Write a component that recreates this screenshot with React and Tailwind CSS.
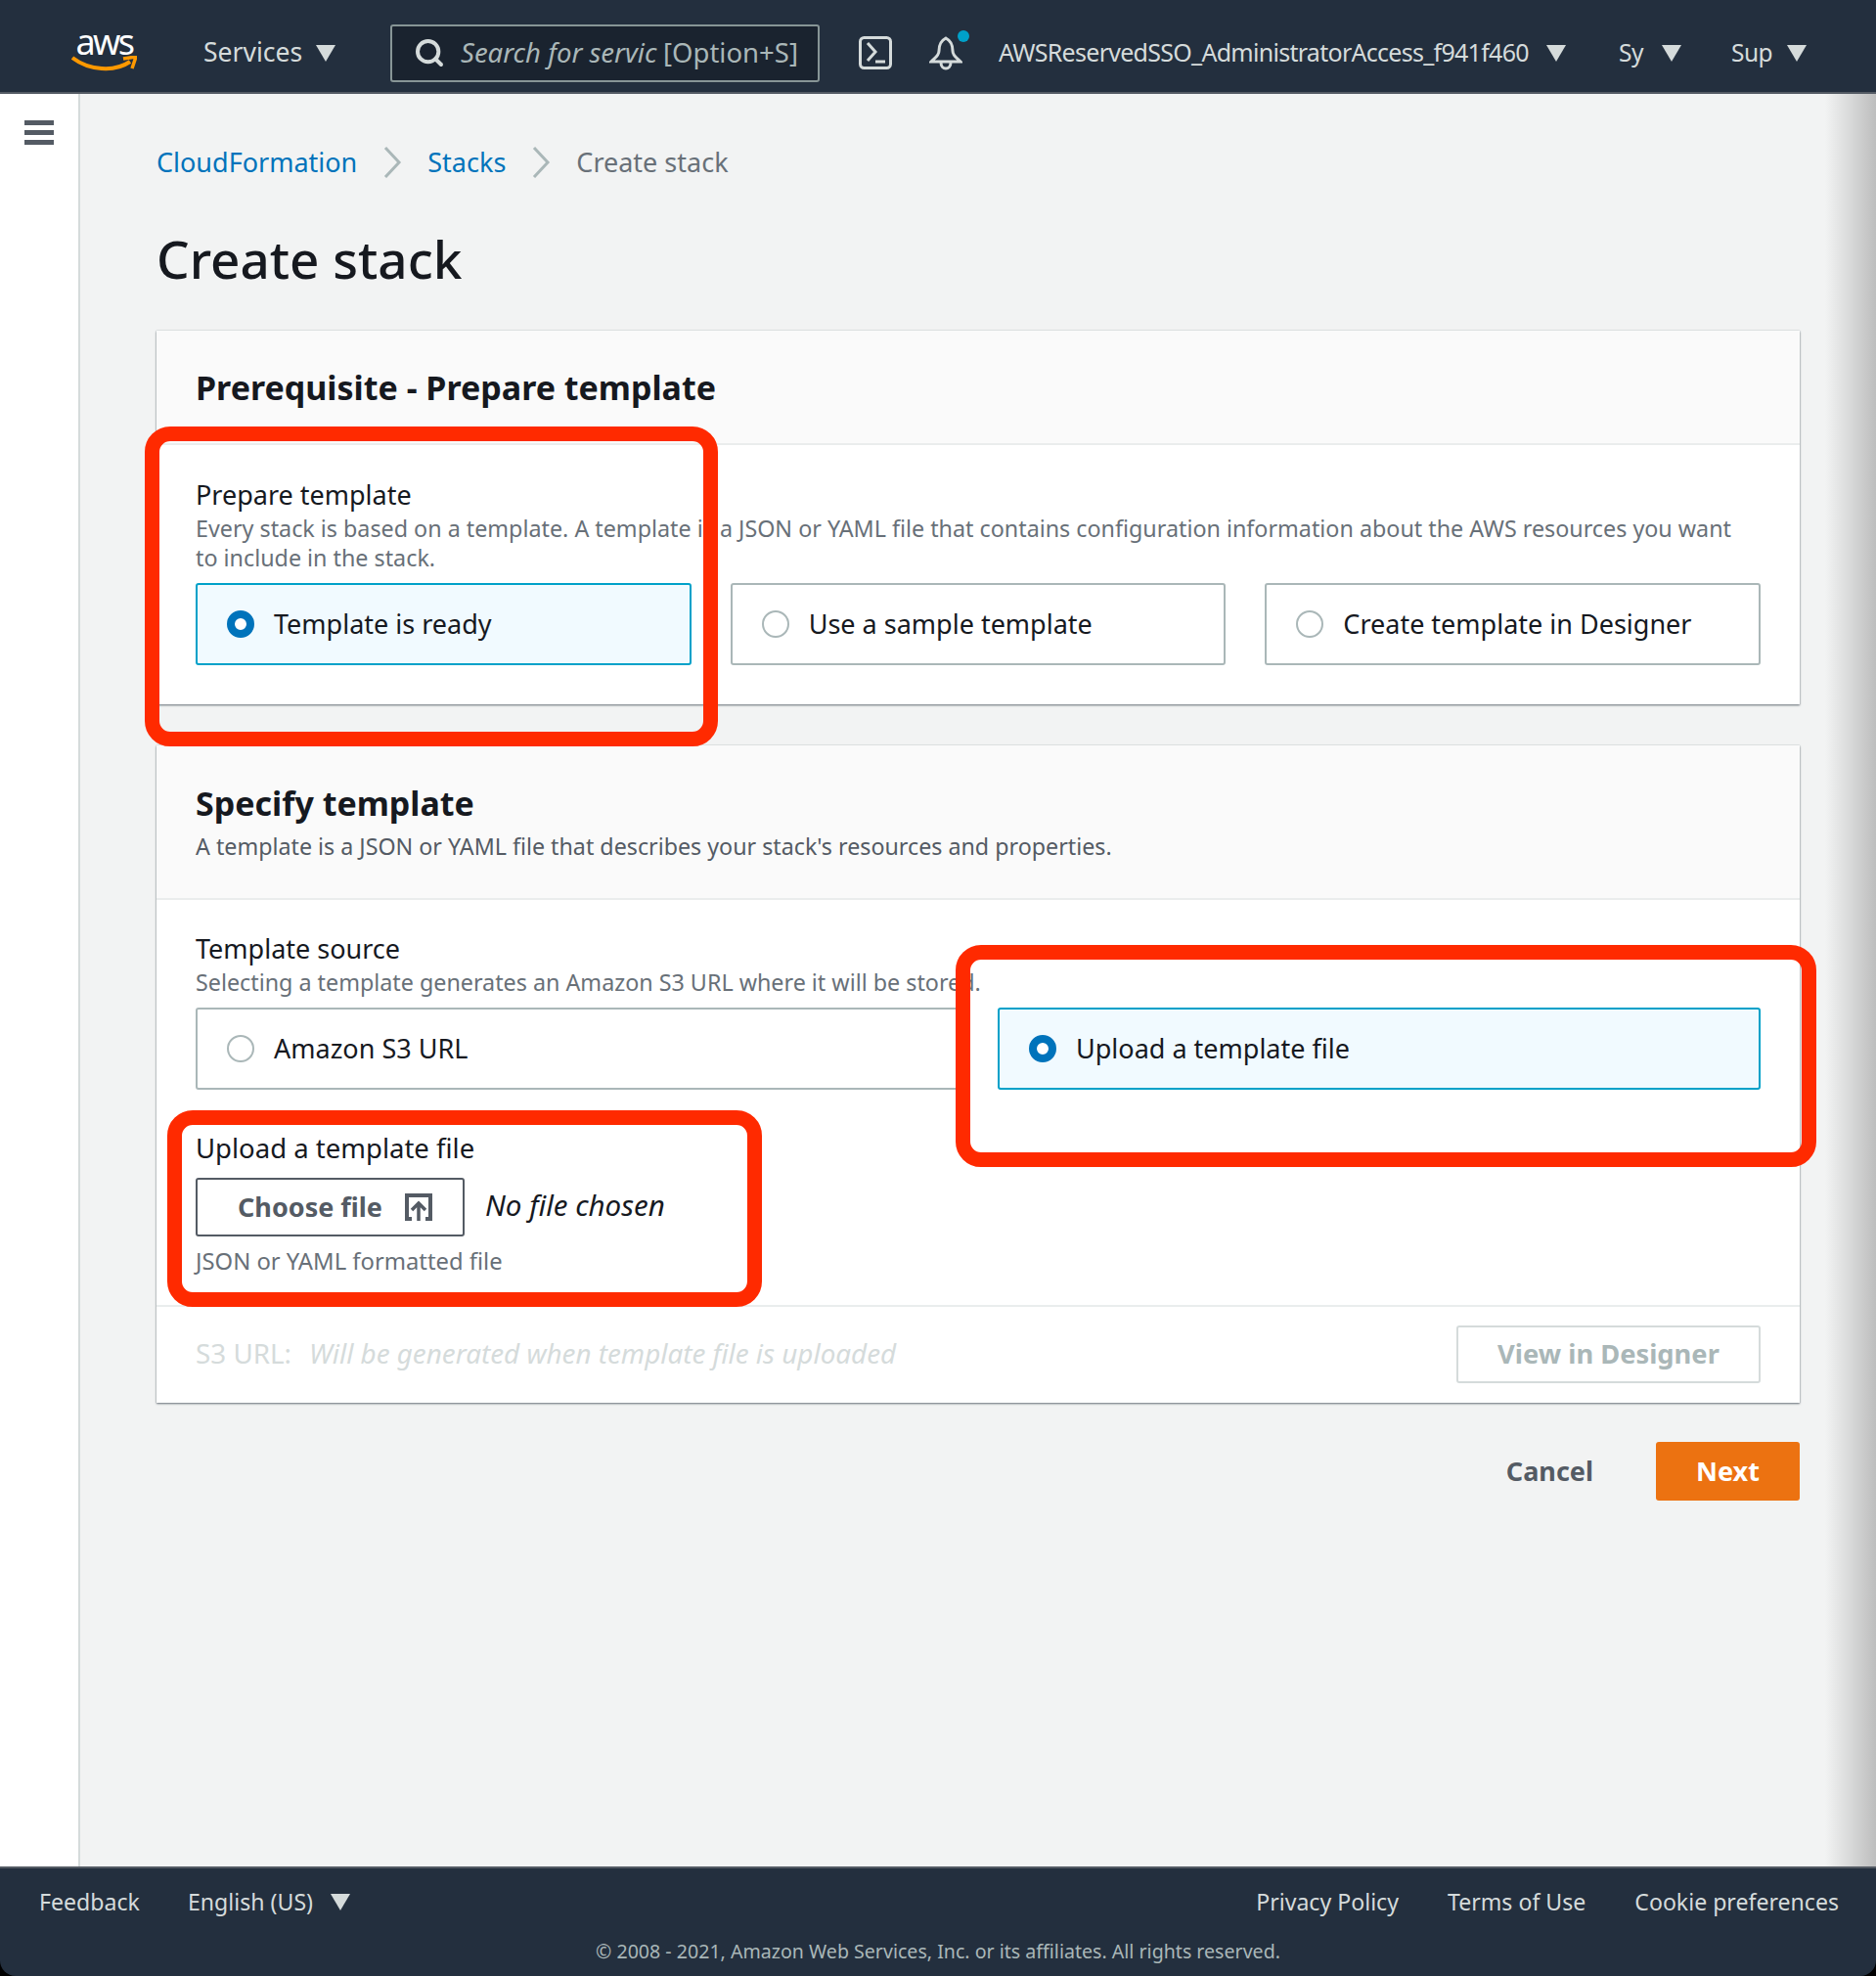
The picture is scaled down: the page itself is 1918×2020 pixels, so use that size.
import { Search } from "lucide-react";

function Caret({ className = "" }) {
    return (
        <svg width="20" height="17" viewBox="0 0 20 17" className={"shrink-0 " + className}>
            <path d="M0 0 H20 L10 17 Z" fill="#d5dbdb" />
        </svg>
    );
}

function Radio({ checked }) {
    if (checked) {
        return <span className="w-[28px] h-[28px] shrink-0 rounded-full border-[8px] border-[#0073bb] bg-white" />;
    }
    return <span className="w-[28px] h-[28px] shrink-0 rounded-full border-2 border-[#aab7b8] bg-white" />;
}

function Tile({ label, checked }) {
    return (
        <div
            className={
                "h-[84px] flex items-center gap-[20px] pl-[30px] rounded-[3px] border-2 text-[27px] text-[#16191f] " +
                (checked ? "border-[#00a1c9] bg-[#f1faff]" : "border-[#aab7b8] bg-white")
            }
        >
            <Radio checked={checked} />
            <span>{label}</span>
        </div>
    );
}

function Chevron() {
    return (
        <svg width="20" height="32" viewBox="0 0 20 32" className="mx-[26px] shrink-0">
            <path d="M3 1 L17 16 L3 31" fill="none" stroke="#aab7b8" strokeWidth="3" />
        </svg>
    );
}

function RedBox({ className }) {
    return <div className={"absolute border-[15px] border-[#ff2a00] rounded-[26px] " + className} />;
}

function Header() {
    return (
        <header className="h-[96px] shrink-0 flex items-center pt-[14px] bg-[#232f3e] border-b-2 border-[#545b64] text-[#d5dbdb] text-[26.5px]">
            <div className="w-[208px] pl-[73px] pb-[8px] shrink-0">
                <div className="w-[67px] flex flex-col items-center">
                    <span className="text-[36px] leading-[30px] text-white tracking-[-2.5px]">aws</span>
                    <svg width="67" height="16" viewBox="0 0 67 16" className="mt-[-1px]">
                        <path d="M1 2 C18 15 44 17 60 6" fill="none" stroke="#f90" strokeWidth="4" />
                        <path d="M53 3 L66 1 L62 13" fill="none" stroke="#f90" strokeWidth="3.5" />
                    </svg>
                </div>
            </div>
            <div className="w-[191px] shrink-0 flex items-center gap-[14px]">
                <span>Services</span>
                <Caret />
            </div>
            <div className="w-[439px] h-[59px] shrink-0 flex items-center rounded-[3px] border-2 border-[#879596] bg-[#1a232f] pl-[22px] text-[27.5px] text-[#aab7b8]">
                <Search size={32} strokeWidth={3} className="text-[#d5dbdb] shrink-0" />
                <span className="ml-[16px] w-[201px] shrink-0 overflow-hidden whitespace-nowrap italic">Search for servic</span>
                <span className="ml-[6px]">[Option+S]</span>
            </div>
            <svg width="34" height="34" viewBox="0 0 34 34" className="ml-[40px] shrink-0">
                <rect x="1.5" y="1.5" width="31" height="31" rx="4" fill="none" stroke="#d5dbdb" strokeWidth="3" />
                <path d="M9 7 L17 16 L9 25 M17 26 H27" fill="none" stroke="#d5dbdb" strokeWidth="3" />
            </svg>
            <div className="relative ml-[38px] w-[34px] h-[36px] shrink-0">
                <svg width="34" height="36" viewBox="0 0 34 36">
                    <path
                        d="M17 3 C11 6 10 11 10 16 C10 21 6 23 2 27 H32 C28 23 24 21 24 16 C24 11 23 6 17 3 Z M12 28 C12 36 22 36 22 28"
                        fill="none"
                        stroke="#d5dbdb"
                        strokeWidth="3"
                    />
                </svg>
                <span className="absolute right-[-7px] top-[-5px] w-[12px] h-[12px] rounded-full bg-[#00a1c9]" />
            </div>
            <div className="ml-[37px] w-[634px] shrink-0 flex items-center gap-[18px]">
                <span className="w-[542px] whitespace-nowrap text-[25px] tracking-[-0.72px]">AWSReservedSSO_AdministratorAccess_f941f460</span>
                <Caret />
            </div>
            <div className="w-[115px] shrink-0 flex items-center">
                <span className="w-[44px] text-[24.5px] tracking-[-0.5px]">Sy</span>
                <Caret />
            </div>
            <div className="flex items-center">
                <span className="w-[57px] text-[24.5px] tracking-[-0.5px]">Sup</span>
                <Caret />
            </div>
        </header>
    );
}

function Footer() {
    return (
        <footer className="h-[112px] shrink-0 bg-[#232f3e] border-t-2 border-[#545b64] rounded-b-[16px] text-[#d5dbdb] relative">
            <div className="flex items-center pt-[18px] pl-[40px] pr-[38px] text-[23.1px] leading-[32px]">
                <span className="w-[152px]">Feedback</span>
                <span className="w-[146px]">English (US)</span>
                <Caret />
                <div className="ml-auto flex gap-[50px]">
                    <span>Privacy Policy</span>
                    <span>Terms of Use</span>
                    <span>Cookie preferences</span>
                </div>
            </div>
            <div className="mt-[21px] text-center text-[19.6px] leading-[28px] text-[#aab7b8]">
                © 2008 - 2021, Amazon Web Services, Inc. or its affiliates. All rights reserved.
            </div>
        </footer>
    );
}

export default function App() {
    return (
        <div className="relative w-[1918px] h-[2020px] overflow-hidden flex flex-col bg-black font-['Noto_Sans',sans-serif]">
            <Header />
            <div className="flex-1 flex min-h-0">
                <aside className="w-[82px] shrink-0 bg-white border-r-2 border-[#d5dbdb] pt-[27px] pl-[25px]">
                    <div className="w-[30px] flex flex-col gap-[5px]">
                        <span className="h-[5px] bg-[#545b64]" />
                        <span className="h-[5px] bg-[#545b64]" />
                        <span className="h-[5px] bg-[#545b64]" />
                    </div>
                </aside>
                <main className="flex-1 bg-[#f2f3f3] pl-[78px] pr-[78px]">
                    <nav className="mt-[53px] h-[34px] flex items-center text-[27px]">
                        <span className="text-[#0073bb]">CloudFormation</span>
                        <Chevron />
                        <span className="text-[#0073bb]">Stacks</span>
                        <Chevron />
                        <span className="text-[#687078]">Create stack</span>
                    </nav>
                    <h1 className="mt-[49px] h-[66px] text-[53px] leading-[66px] font-medium text-[#16191f]">Create stack</h1>

                    <section className="mt-[40px] h-[382px] bg-white shadow-[0_1px_2px_#687078,0_0_1px_#aab7b8] flex flex-col">
                        <div className="h-[117px] shrink-0 bg-[#fafafa] border-b-2 border-[#eaeded] pl-[40px] pt-[34px]">
                            <h2 className="text-[34px] leading-[48px] font-bold text-[#16191f]">Prerequisite - Prepare template</h2>
                        </div>
                        <div className="px-[40px] pt-[33px]">
                            <div className="text-[27px] leading-[36px] text-[#16191f]">Prepare template</div>
                            <p className="mt-[1px] text-[23.3px] leading-[30px] text-[#687078] mb-[11px]">
                                Every stack is based on a template. A template is a JSON or YAML file that contains configuration information about the AWS resources you want
                                <br />
                                to include in the stack.
                            </p>
                            <div className="grid grid-cols-3 gap-[40px]">
                                <Tile label="Template is ready" checked />
                                <Tile label="Use a sample template" />
                                <Tile label="Create template in Designer" />
                            </div>
                        </div>
                    </section>

                    <section className="mt-[42px] h-[672px] bg-white shadow-[0_1px_2px_#687078,0_0_1px_#aab7b8] flex flex-col">
                        <div className="h-[158px] shrink-0 bg-[#fafafa] border-b-2 border-[#eaeded] pl-[40px] pt-[35px]">
                            <h2 className="text-[34px] leading-[48px] font-bold text-[#16191f]">Specify template</h2>
                            <p className="mt-[5px] text-[23.25px] leading-[30px] text-[#545b64]">
                                A template is a JSON or YAML file that describes your stack's resources and properties.
                            </p>
                        </div>
                        <div className="flex-1 px-[40px] pt-[32px]">
                            <div className="text-[27px] leading-[36px] text-[#16191f]">Template source</div>
                            <p className="mt-[1px] text-[23.3px] leading-[30px] text-[#687078] mb-[11px]">
                                Selecting a template generates an Amazon S3 URL where it will be stored.
                            </p>
                            <div className="grid grid-cols-2 gap-[40px]">
                                <Tile label="Amazon S3 URL" />
                                <Tile label="Upload a template file" checked />
                            </div>
                            <div className="mt-[42px] text-[27.5px] leading-[36px] text-[#16191f]">Upload a template file</div>
                            <div className="mt-[12px] flex items-center">
                                <button className="w-[275px] h-[60px] flex items-center gap-[23px] pl-[41px] rounded-[3px] border-2 border-[#545b64] text-[27px] font-bold text-[#545b64]">
                                    <span>Choose file</span>
                                    <svg width="28" height="28" viewBox="0 0 28 28">
                                        <path d="M7 26 H2 V2 H26 V26 H21" fill="none" stroke="#545b64" strokeWidth="4" />
                                        <path d="M14 28 V10 M7 17 L14 10 L21 17" fill="none" stroke="#545b64" strokeWidth="3.5" />
                                    </svg>
                                </button>
                                <span className="ml-[21px] text-[29.5px] leading-[40px] pb-[4px] italic text-[#16191f]">No file chosen</span>
                            </div>
                            <div className="mt-[10px] text-[23.8px] leading-[30px] text-[#687078]">JSON or YAML formatted file</div>
                        </div>
                        <div className="h-[100px] shrink-0 border-t-2 border-[#eaeded] flex items-center pl-[40px] pr-[40px] pb-[2px] text-[27.8px] text-[#d5dbdb]">
                            <span>S3 URL:</span>
                            <span className="ml-[18px] italic">Will be generated when template file is uploaded</span>
                            <button className="ml-auto w-[311px] h-[59px] rounded-[3px] border-2 border-[#d5dbdb] text-[27.3px] font-bold text-[#aab7b8]">
                                View in Designer
                            </button>
                        </div>
                    </section>

                    <div className="mt-[40px] flex items-center justify-end text-[27px] font-bold">
                        <span className="text-[#545b64]">Cancel</span>
                        <button className="ml-[64px] w-[147px] h-[60px] rounded-[3px] bg-[#ec7211] text-white">Next</button>
                    </div>
                </main>
            </div>
            <Footer />

            {/* annotation boxes drawn over the screenshot */}
            <RedBox className="left-[148px] top-[436px] w-[586px] h-[327px]" />
            <RedBox className="left-[977px] top-[966px] w-[880px] h-[227px]" />
            <RedBox className="left-[171px] top-[1135px] w-[608px] h-[201px]" />

            {/* window shadow on the right edge */}
            <div className="absolute right-0 top-[96px] bottom-[112px] w-[52px] bg-gradient-to-r from-transparent to-[#00000038]" />
        </div>
    );
}
